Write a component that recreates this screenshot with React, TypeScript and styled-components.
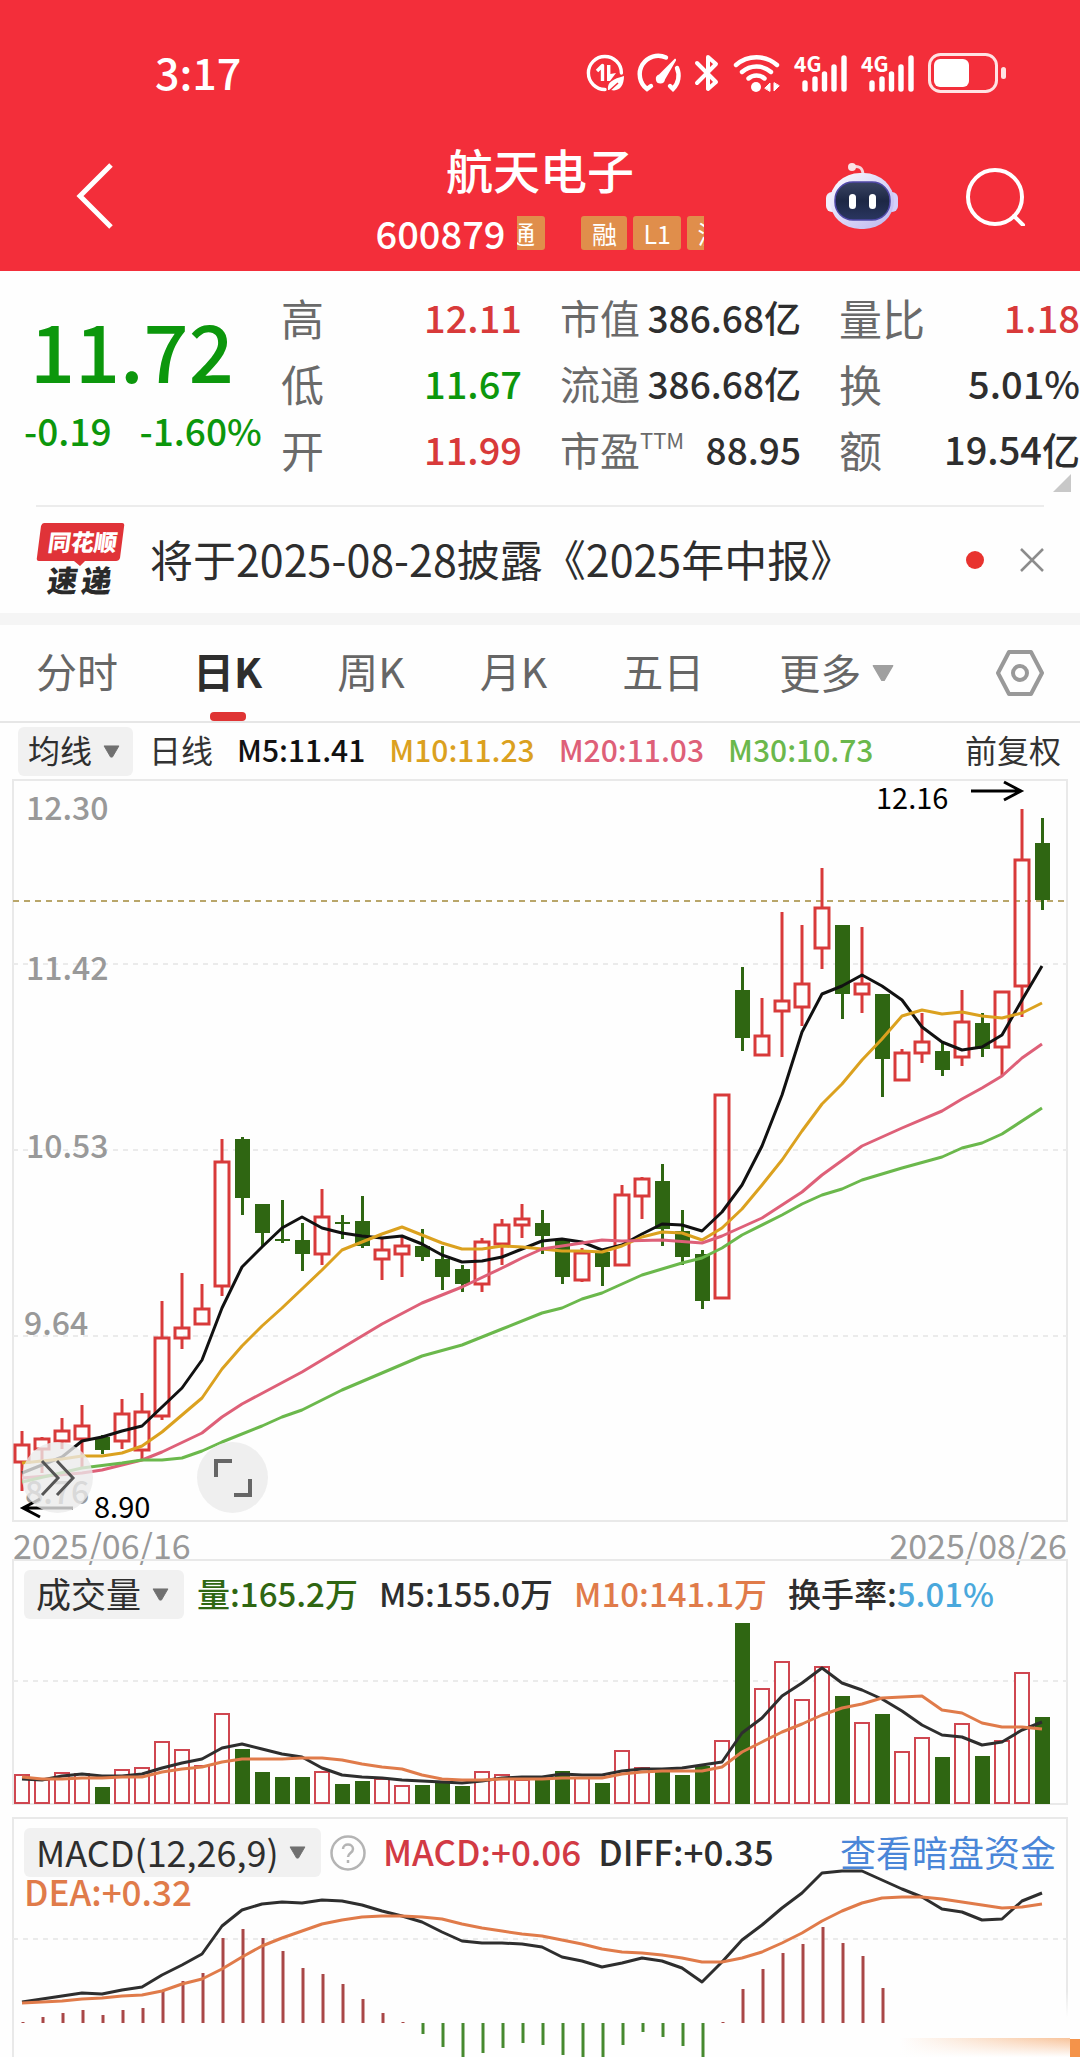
import React from 'react';
import styled, { createGlobalStyle } from 'styled-components';

const RED = '#d83a3a';
const GREEN = '#2f6612';
const ORANGE = '#e07b4a';
const INK = '#2e2e2e';
const FONT = '"Noto Sans CJK SC", "Noto Sans", sans-serif';

const GlobalStyle = createGlobalStyle`
  * { box-sizing: border-box; }
  body { margin: 0; background: #fefefe; font-family: ${FONT}; color: ${INK}; }
  button, select { font: inherit; color: inherit; background: none; border: 0; padding: 0; margin: 0; }
  dl, dt, dd, h1, p { margin: 0; font-weight: inherit; font-size: inherit; }
  svg { display: block; flex: none; }
`;

const Page = styled.main`
  position: relative;
  overflow: hidden;
`;

/* ---------- header ---------- */

const Header = styled.header`
  background: #f32e3a;
  color: #fff;
  padding-bottom: 21px;
`;

const StatusBar = styled.div`
  display: flex;
  align-items: center;
  justify-content: space-between;
  height: 141px;
  padding: 4px 74px 0 155px;
`;

const Clock = styled.time`
  padding-bottom: 4px;
  font-size: 43px;
  font-weight: 500;
  line-height: 48px;
`;

const StatusIcons = styled.div`
  display: flex;
  align-items: center;
  gap: 14px;
  svg { overflow: visible; }
`;

const NavBar = styled.nav`
  display: grid;
  grid-template-columns: 1fr auto 1fr;
  align-items: center;
  padding: 0 54px 0 76px;
`;

const IconButton = styled.button`
  display: flex;
  cursor: pointer;
`;

const NavActions = styled.div`
  display: flex;
  align-items: center;
  justify-content: flex-end;
  gap: 68px;
`;

const TitleBlock = styled.div`
  display: flex;
  flex-direction: column;
  align-items: center;
  gap: 19px;
  margin-right: 22px;
`;

const StockName = styled.h1`
  font-size: 47px;
  font-weight: 500;
  line-height: 56px;
`;

const CodeRow = styled.div`
  display: flex;
  align-items: center;
  gap: 12px;
  height: 34px;
  font-size: 38px;
  font-weight: 500;
  line-height: 34px;
`;

const TagTicker = styled.div`
  display: flex;
  width: 187px;
  overflow: hidden;
`;

const TagTrack = styled.div`
  display: flex;
  gap: 6px;
  margin-left: -18px;
`;

const Tag = styled.span<{ $last?: boolean }>`
  flex: none;
  min-width: 46px;
  padding: 0 10px;
  margin-right: ${(p) => (p.$last ? 30 : 0)}px;
  border-radius: 3px;
  background: #e08e4b;
  font-size: 25px;
  font-weight: 400;
  line-height: 34px;
  text-align: center;
`;

/* ---------- quote ---------- */

const Quote = styled.section`
  display: grid;
  grid-template-columns: 219px repeat(3, 1fr);
  column-gap: 38px;
  padding: 13px 0 23px 24px;
`;

const PriceBlock = styled.div`
  display: flex;
  flex-direction: column;
  gap: 8px;
  padding-top: 20px;
  color: #0c970c;
`;

const Price = styled.strong`
  padding-left: 6px;
  font-size: 79px;
  font-weight: 500;
  line-height: 90px;
`;

const Change = styled.div`
  display: flex;
  gap: 28px;
  font-size: 37px;
  font-weight: 500;
  line-height: 56px;
  white-space: nowrap;
`;

const StatList = styled.dl`
  display: flex;
  flex-direction: column;
`;

const Stat = styled.div`
  display: flex;
  align-items: center;
  justify-content: space-between;
  height: 66px;
  white-space: nowrap;
`;

const StatLabel = styled.dt<{ $wide?: boolean }>`
  display: flex;
  font-size: ${(p) => (p.$wide ? 43 : 40)}px;
  line-height: 60px;
  color: #6a6a6a;
`;

const Sup = styled.sup`
  font-size: 22px;
  line-height: 40px;
  vertical-align: baseline;
`;

const StatValue = styled.dd<{ $color?: string; $compact?: boolean }>`
  font-size: ${(p) => (p.$compact ? 37 : 38)}px;
  font-weight: 500;
  line-height: 60px;
  color: ${(p) => p.$color || INK};
`;

const Corner = styled.svg`
  position: absolute;
  right: 9px;
  top: 474px;
`;

/* ---------- notice ---------- */

const Notice = styled.section`
  display: flex;
  align-items: center;
  height: 108px;
  margin: 0 36px;
  border-top: 2px solid #ececec;
`;

const NoticeText = styled.a`
  flex: 1;
  margin-left: 25px;
  padding-bottom: 4px;
  font-size: 43px;
  line-height: 60px;
  color: ${INK};
  text-decoration: none;
  white-space: nowrap;
`;

const Dot = styled.i`
  width: 18px;
  height: 18px;
  margin-right: 36px;
  border-radius: 50%;
  background: #e8332f;
`;

/* ---------- period tabs ---------- */

const TabBar = styled.div`
  display: flex;
  align-items: center;
  gap: 75px;
  height: 110px;
  padding: 0 36px;
  border-top: 12px solid #f5f5f5;
  border-bottom: 2px solid #e6e6e6;
  & > :last-child { margin-left: auto; }
`;

const Tab = styled.button<{ $active?: boolean }>`
  display: flex;
  flex-direction: column;
  align-items: center;
  height: 96px;
  font-size: 41px;
  font-weight: ${(p) => (p.$active ? 700 : 400)};
  line-height: 91px;
  color: ${(p) => (p.$active ? INK : '#666')};
  white-space: nowrap;
  cursor: pointer;
  &::after {
    content: '';
    width: 36px;
    height: 9px;
    margin-top: -4px;
    border-radius: 4px;
    background: ${(p) => (p.$active ? '#df3434' : 'transparent')};
  }
`;

const Picker = styled.label<{ $chip?: boolean; $size: number }>`
  display: flex;
  flex: none;
  align-items: center;
  gap: ${(p) => (p.$chip ? 10 : 11)}px;
  height: 49px;
  margin-right: ${(p) => (p.$chip ? -8 : 0)}px;
  padding: ${(p) => (!p.$chip ? '0' : p.$size > 32 ? '0 15px 0 12px' : '0 13px 0 10px')};
  border-radius: 6px;
  background: ${(p) => (p.$chip ? '#f1f1f1' : 'transparent')};
  font-size: ${(p) => p.$size}px;
  color: ${(p) => (p.$chip ? INK : '#666')};
  select {
    appearance: none;
    outline: none;
    height: 48px;
    padding-bottom: 4px;
    line-height: 44px;
  }
`;

/* ---------- charts ---------- */

const Legend = styled.div`
  display: flex;
  align-items: center;
  gap: 24px;
  height: 56px;
  padding: 0 19px 0 18px;
  font-size: 30px;
  line-height: 44px;
  white-space: nowrap;
`;

const LegendName = styled.span<{ $end?: boolean }>`
  margin-left: ${(p) => (p.$end ? 'auto' : 0)};
  padding-bottom: 4px;
  font-size: 32px;
  color: #333;
`;

const Value = styled.span<{ $color: string }>`
  padding-bottom: 4px;
  color: ${(p) => p.$color};
  font-weight: 500;
`;

const Dates = styled.div`
  display: flex;
  justify-content: space-between;
  height: 37px;
  padding: 0 13px;
  font-size: 34px;
  line-height: 46px;
  color: #999;
`;

const Panel = styled.section`
  display: grid;
  & > * { grid-area: 1 / 1; }
`;

const PanelHead = styled.div<{ $gap: number; $size: number }>`
  display: flex;
  flex-wrap: wrap;
  align-items: center;
  align-content: flex-start;
  column-gap: ${(p) => p.$gap}px;
  padding: 11px 24px 0;
  z-index: 1;
  font-size: ${(p) => p.$size}px;
  line-height: 44px;
  white-space: nowrap;
`;

const SecondLine = styled.div`
  flex-basis: 100%;
  line-height: 28px;
`;

const DarkPoolLink = styled.a`
  margin-left: auto;
  padding-bottom: 4px;
  font-size: 36px;
  color: #4a86d8;
  text-decoration: none;
`;

const Plot = styled.svg`
  width: 100%;
  height: auto;
`;

const ChartTools = styled.div`
  display: flex;
  align-items: flex-end;
  align-self: end;
  gap: 104px;
  padding: 0 0 9px 22px;
`;

const RoundButton = styled.button`
  display: flex;
  align-items: center;
  justify-content: center;
  width: 71px;
  height: 71px;
  border-radius: 50%;
  background: rgba(234, 234, 234, 0.78);
  cursor: pointer;
`;

const Glow = styled.div`
  position: absolute;
  right: 0;
  bottom: 0;
  width: 180px;
  height: 66px;
  background:
    linear-gradient(#f4934a, #f4934a) 100% 100% / 10px 18px no-repeat,
    linear-gradient(180deg, #fefefe00, #fefefe) 0 100% / 170px 19px no-repeat,
    linear-gradient(90deg, #fff0, #f8c39a) 0 100% / 170px 19px no-repeat,
    linear-gradient(180deg, #fefefe00, #fefefe 40%);
`;

/* ---------- data ---------- */

// [rising, high, body top, body bottom, low] in chart units
type Candle = [number, number, number, number, number];
const candles: Candle[] = [
  [1, 1431, 1444, 1463, 1491], [1, 1437, 1438, 1450, 1473], [1, 1418, 1430, 1442, 1449], [1, 1405, 1425, 1440, 1467],
  [0, 1435, 1437, 1450, 1454], [1, 1399, 1413, 1442, 1449], [1, 1393, 1411, 1451, 1460], [1, 1301, 1337, 1417, 1420],
  [1, 1273, 1327, 1339, 1349], [1, 1284, 1308, 1325, 1325], [1, 1139, 1161, 1287, 1296], [0, 1137, 1139, 1198, 1215],
  [0, 1204, 1204, 1233, 1247], [0, 1200, 1239, 1241, 1243], [0, 1223, 1240, 1254, 1271], [1, 1189, 1216, 1255, 1265],
  [0, 1215, 1222, 1224, 1239], [0, 1196, 1221, 1246, 1248], [1, 1239, 1249, 1260, 1280], [1, 1237, 1245, 1255, 1277],
  [0, 1229, 1246, 1257, 1261], [0, 1246, 1259, 1277, 1290], [0, 1265, 1269, 1284, 1292], [1, 1238, 1241, 1285, 1292],
  [1, 1219, 1224, 1245, 1265], [1, 1204, 1218, 1226, 1238], [0, 1210, 1223, 1236, 1254], [0, 1239, 1239, 1277, 1284],
  [1, 1248, 1252, 1281, 1282], [0, 1252, 1252, 1267, 1286], [1, 1185, 1194, 1266, 1266], [1, 1177, 1178, 1197, 1219],
  [0, 1164, 1181, 1229, 1246], [0, 1210, 1231, 1257, 1265], [0, 1250, 1254, 1301, 1309], [1, 1094, 1094, 1299, 1299],
  [0, 967, 990, 1038, 1051], [1, 998, 1035, 1056, 1056], [1, 912, 1000, 1012, 1057], [1, 925, 983, 1008, 1026],
  [1, 868, 907, 949, 969], [0, 925, 925, 994, 1019], [1, 927, 983, 995, 1013], [0, 994, 994, 1059, 1097],
  [1, 1049, 1052, 1081, 1081], [1, 1013, 1041, 1054, 1063], [0, 1043, 1051, 1070, 1076], [1, 990, 1021, 1058, 1066],
  [0, 1013, 1023, 1049, 1057], [1, 991, 991, 1048, 1075], [1, 809, 859, 987, 1017], [0, 818, 843, 900, 910],
];

type Point = [number, number];
const series = (ys: number[]): Point[] => ys.map((y, i) => [i, y]);

const ma5 = series([
  1473, 1465, 1457, 1441, 1437, 1431, 1426, 1407, 1388, 1360, 1308, 1267, 1247, 1228, 1217, 1228, 1233, 1236, 1238, 1236,
  1244, 1255, 1262, 1261, 1257, 1249, 1241, 1239, 1242, 1250, 1245, 1234, 1224, 1225, 1231, 1212, 1185, 1146, 1095, 1032,
  994, 986, 975, 986, 1000, 1027, 1042, 1050, 1047, 1035, 1000, 966,
]);
const ma10 = series([
  1463, 1461, 1459, 1456, 1456, 1453, 1446, 1432, 1415, 1398, 1369, 1346, 1326, 1308, 1289, 1270, 1250, 1242, 1234, 1227,
  1235, 1243, 1249, 1249, 1246, 1247, 1249, 1251, 1251, 1252, 1246, 1237, 1232, 1233, 1240, 1228, 1209, 1185, 1160, 1131,
  1104, 1084, 1060, 1039, 1016, 1010, 1014, 1012, 1016, 1018, 1013, 1003,
]);
const ma20: Point[] = [
  [0, 1478], [3, 1473], [4, 1470], [6, 1460], [7, 1452], [9, 1433], [10, 1417], [11, 1404], [14, 1372], [18, 1324],
  [20, 1303], [22, 1287], [24, 1268], [25, 1258], [26, 1249], [28, 1243], [29, 1240], [30, 1241], [32, 1240], [34, 1243],
  [35, 1236], [37, 1218], [39, 1192], [40, 1175], [42, 1146], [44, 1128], [46, 1111], [47, 1099], [48, 1088], [49, 1076],
  [50, 1058], [51, 1044],
];
const ma30: Point[] = [
  [0, 1482], [3, 1468], [5, 1463], [6, 1460], [7, 1460], [8, 1458], [9, 1451], [10, 1442], [12, 1426], [13, 1417],
  [14, 1410], [16, 1390], [18, 1373], [20, 1356], [22, 1345], [24, 1329], [26, 1313], [27, 1308], [28, 1299], [29, 1293],
  [30, 1284], [31, 1275], [32, 1269], [33, 1263], [34, 1258], [35, 1248], [36, 1235], [38, 1215], [39, 1204], [40, 1195],
  [41, 1189], [42, 1180], [44, 1168], [46, 1157], [47, 1148], [48, 1143], [49, 1134], [51, 1108],
];

const volumeTops = [
  1774, 1779, 1772, 1773, 1787, 1769, 1767, 1741, 1749, 1765, 1713, 1749, 1772, 1777, 1777, 1771, 1784, 1781, 1778, 1785,
  1785, 1782, 1786, 1771, 1774, 1779, 1780, 1771, 1777, 1783, 1750, 1767, 1770, 1775, 1766, 1740, 1623, 1688, 1661, 1699,
  1666, 1696, 1722, 1714, 1751, 1737, 1757, 1723, 1756, 1740, 1672, 1717,
];
const volume5 = series([
  1779, 1780, 1776, 1774, 1776, 1776, 1774, 1768, 1763, 1759, 1748, 1744, 1749, 1754, 1757, 1768, 1775, 1777, 1778, 1780,
  1781, 1782, 1783, 1781, 1778, 1777, 1777, 1774, 1775, 1775, 1771, 1769, 1769, 1768, 1765, 1762, 1733, 1718, 1696, 1683,
  1668, 1683, 1690, 1699, 1711, 1725, 1735, 1737, 1745, 1742, 1730, 1722,
]);
const volume10 = series([
  1777, 1779, 1779, 1778, 1778, 1777, 1777, 1772, 1769, 1767, 1762, 1759, 1759, 1759, 1758, 1758, 1760, 1764, 1767, 1769,
  1775, 1779, 1780, 1780, 1779, 1779, 1779, 1778, 1778, 1778, 1774, 1772, 1771, 1771, 1771, 1767, 1752, 1742, 1732, 1724,
  1715, 1708, 1704, 1698, 1697, 1696, 1710, 1713, 1723, 1727, 1727, 1729,
]);

const ZERO = 2023;
const histogram = [
  2023, 2017, 2013, 2010, 2015, 2010, 2008, 1991, 1981, 1973, 1938, 1929, 1938, 1951, 1968, 1974, 1984, 1999, 2013, 2023,
  2034, 2047, 2058, 2053, 2048, 2043, 2045, 2055, 2058, 2060, 2045, 2032, 2037, 2046, 2060, 2023, 1989, 1969, 1953, 1944,
  1927, 1943, 1956, 1988,
];
const diff = series([
  2002, 1999, 1996, 1993, 1994, 1990, 1987, 1975, 1965, 1954, 1926, 1910, 1904, 1902, 1903, 1900, 1901, 1905, 1911, 1916,
  1922, 1932, 1941, 1943, 1943, 1944, 1947, 1957, 1961, 1967, 1963, 1958, 1961, 1968, 1982, 1962, 1940, 1925, 1908, 1893,
  1873, 1871, 1871, 1880, 1889, 1897, 1909, 1912, 1920, 1919, 1901, 1893,
]);
const dea = series([
  2003, 2002, 2001, 1999, 1998, 1996, 1995, 1991, 1984, 1979, 1969, 1957, 1946, 1938, 1931, 1924, 1920, 1917, 1916, 1916,
  1917, 1919, 1924, 1928, 1931, 1934, 1936, 1940, 1944, 1949, 1952, 1953, 1955, 1958, 1962, 1962, 1958, 1952, 1943, 1933,
  1921, 1911, 1903, 1898, 1897, 1897, 1899, 1902, 1905, 1908, 1907, 1904,
]);

const xOf = (i: number) => 22 + i * 20;

/* ---------- chart pieces ---------- */

const Line = ({ points, color }: { points: Point[]; color: string }) => (
  <polyline
    points={points.map(([i, y]) => `${xOf(i)},${y}`).join(' ')}
    fill="none" stroke={color} strokeWidth="3" strokeLinejoin="round"
  />
);

const GridLine = ({ y, color = '#ebebeb', dash = '5 5' }: { y: number; color?: string; dash?: string }) => (
  <line x1="13" x2="1067" y1={y} y2={y} stroke={color} strokeWidth="2" strokeDasharray={dash} />
);

const Frame = ({ y, height }: { y: number; height: number }) => (
  <rect x="13" y={y} width="1054" height={height} fill="none" stroke="#e9e9e9" strokeWidth="2" />
);

const CandleMark = ({ candle: [up, high, top, bottom, low], index }: { candle: Candle; index: number }) => {
  const x = xOf(index);
  if (!up) {
    return (
      <g fill={GREEN}>
        <rect x={x - 1} y={high} width="3" height={low - high} />
        <rect x={x - 7} y={top} width="15" height={bottom - top} />
      </g>
    );
  }
  return (
    <g stroke={RED} strokeWidth="3" fill="none">
      <path d={`M${x} ${high}V${top}M${x} ${bottom}V${low}`} />
      <rect x={x - 7} y={top + 1} width="14" height={bottom - top - 2} />
    </g>
  );
};

const PriceChart = () => (
  <Plot viewBox="0 779 1080 743" role="img" aria-label="日K线图">
    <Frame y={780} height={741} />
    {[964, 1150, 1336].map((y) => <GridLine key={y} y={y} />)}
    <GridLine y={901} color="#b9a66a" dash="6 5" />
    <g fill="#999" fontSize="32" fontFamily={FONT} fontWeight="500">
      <text x="26" y="820">12.30</text>
      <text x="26" y="980">11.42</text>
      <text x="26" y="1158">10.53</text>
      <text x="24" y="1335">9.64</text>
      <text x="25" y="1504">8.76</text>
    </g>
    {candles.map((c, i) => <CandleMark key={i} candle={c} index={i} />)}
    <Line points={ma5} color="#111" />
    <Line points={ma10} color="#dba11f" />
    <Line points={ma20} color="#de6078" />
    <Line points={ma30} color="#6bb84c" />
    <g fill="#000" fontSize="29" fontFamily={FONT}>
      <text x="876" y="809">12.16</text>
      <text x="94" y="1518">8.90</text>
    </g>
    <g fill="none" stroke="#000" strokeWidth="3">
      <path d="M971 791H1021M1004 782L1021 791L1004 800" />
      <path d="M73 1508H23M40 1499L23 1508L40 1517" />
    </g>
  </Plot>
);

const VolumeChart = () => (
  <Plot viewBox="0 1559 1080 258" role="img" aria-label="成交量">
    <Frame y={1560} height={244} />
    <GridLine y={1681} />
    {volumeTops.map((y, i) => candles[i][0] ? (
      <rect key={i} x={xOf(i) - 7} y={y + 1} width="14" height={1803 - y - 1} fill="#fefefe" stroke="#cf4650" strokeWidth="2" />
    ) : (
      <rect key={i} x={xOf(i) - 7} y={y} width="15" height={1804 - y} fill={GREEN} />
    ))}
    <Line points={volume5} color={INK} />
    <Line points={volume10} color={ORANGE} />
  </Plot>
);

const MacdChart = () => (
  <Plot viewBox="0 1817 1080 240" role="img" aria-label="MACD">
    <Frame y={1818} height={260} />
    <GridLine y={1939} />
    {histogram.map((y, i) => (
      <path key={i} d={`M${xOf(i) + 1} ${ZERO}V${y === ZERO ? ZERO - 1 : y}`} stroke={y > ZERO ? '#46892f' : '#a94747'} strokeWidth="3" />
    ))}
    <Line points={diff} color={INK} />
    <Line points={dea} color={ORANGE} />
  </Plot>
);

/* ---------- icons ---------- */

const EcoIcon = () => (
  <svg width="38" height="38" viewBox="0 0 38 38" fill="none" stroke="#fff" strokeWidth="3.4">
    <path d="M18 35.5A16.5 16.5 0 1 1 34.4 19" strokeLinecap="round" />
    <path d="M10 17L15.500 11.500V27" strokeWidth="3.400" strokeLinejoin="round" />
    <path d="M20 11H23.400V20L29 19L23 27H20Z" fill="#fff" stroke="none" />
    <path d="M21 36C20 28 26 25 37 22C37 32 32 38 24 36Z" fill="#fff" stroke="none" />
    <path d="M21 38L31 29" stroke="#f32e3a" strokeWidth="1.6" />
  </svg>
);

const GaugeIcon = () => (
  <svg width="42" height="38" viewBox="0 0 42 38" fill="none" stroke="#fff" strokeWidth="4.400" strokeLinecap="round">
    <path d="M12 32L8 35A18.500 18.500 0 0 1 27 3.500M38 14A19 19 0 0 1 34 35L31 32" />
    <path d="M36 4.500Q37.500 5 37 6.500L26 25.500A4.600 4.600 0 1 1 20 20.500Z" fill="#fff" stroke="none" />
  </svg>
);

const BluetoothIcon = () => (
  <svg width="24" height="38" viewBox="0 0 24 38" fill="none" stroke="#fff" strokeWidth="4" strokeLinejoin="round" strokeLinecap="round">
    <path d="M2 9L21 28L13 35V3L21 10L2 29" />
  </svg>
);

const WifiIcon = () => (
  <svg width="47" height="38" viewBox="0 0 47 38" fill="none" stroke="#fff" strokeWidth="4.400" strokeLinecap="round">
    <path d="M3 11A31 31 0 0 1 44 11M9 18A22 22 0 0 1 38 18M15.500 24.500A12 12 0 0 1 31.500 24.500" />
    <circle cx="23" cy="33" r="5" fill="#fff" stroke="none" />
    <path d="M32 34L37 29V37ZM46 32L41 37V29Z" fill="#fff" strokeWidth="1" />
  </svg>
);

const SignalIcon = () => (
  <svg width="53" height="38" viewBox="0 0 53 38">
    <text x="0" y="18" fill="#fff" fontSize="21" fontWeight="700" fontFamily={FONT}>4G</text>
    <g stroke="#fff" strokeWidth="5.400" strokeLinecap="round">
      <path d="M11 35V29M21 35V25M30.500 35V20M40 35V13M50 35V4" />
    </g>
  </svg>
);

const BatteryIcon = () => (
  <svg width="78" height="40" viewBox="0 0 78 40" fill="none">
    <rect x="1.500" y="1.500" width="67" height="37" rx="11" stroke="#ffe3e3" strokeWidth="3" />
    <rect x="6" y="6" width="35" height="28" rx="6" fill="#fff" />
    <rect x="73" y="14" width="5" height="12" rx="2.500" fill="#ffe3e3" />
  </svg>
);

const RobotIcon = () => (
  <svg width="72" height="68" viewBox="0 0 72 68">
    <defs>
      <linearGradient id="shell" x1="0" y1="0" x2="1" y2="1">
        <stop offset="0" stopColor="#fff" /><stop offset="0.5" stopColor="#dcd8f8" /><stop offset="1" stopColor="#b9b4ee" />
      </linearGradient>
      <linearGradient id="visor" x1="0" y1="0" x2="0" y2="1">
        <stop offset="0" stopColor="#3a4462" /><stop offset="0.5" stopColor="#1d2745" /><stop offset="1" stopColor="#2a3660" />
      </linearGradient>
    </defs>
    <path d="M26 5C33 3 37 6 37 13" fill="none" stroke="#f6d5dc" strokeWidth="3" />
    <circle cx="26" cy="5" r="4" fill="#fbe3e6" />
    <rect x="0" y="30" width="12" height="20" rx="6" fill="#f1effc" />
    <rect x="60" y="30" width="12" height="20" rx="6" fill="#d4d0fa" />
    <rect x="4" y="11" width="64" height="56" rx="30" fill="url(#shell)" />
    <rect x="9" y="20" width="55" height="38" rx="18" fill="url(#visor)" stroke="#5048a8" strokeWidth="1.500" />
    <rect x="23" y="32" width="7" height="15" rx="3.500" fill="#fff" />
    <rect x="43" y="32" width="7" height="15" rx="3.500" fill="#fff" />
  </svg>
);

const ExpressLogo = () => (
  <svg width="89" height="76" viewBox="0 0 89 76" fontFamily={FONT} fontWeight="900" role="img" aria-label="同花顺速递">
    <path d="M8 1H86Q89 1 88 5L84 36Q83 39 80 39H49L44 44L38 39H3Q0 39 1 35L5 4Q6 1 8 1Z" fill="#e03338" />
    <g transform="skewX(-8)">
      <text x="15" y="29" fontSize="23" fill="#fff">同花顺</text>
      <text x="20" y="70" fontSize="30" fill="#2a2a2a">速</text>
      <text x="54" y="70" fontSize="30" fill="#2a2a2a">递</text>
    </g>
  </svg>
);

const Caret = ({ size = 18, color = '#707070' }: { size?: number; color?: string }) => (
  <svg width={size} height={size - 4} viewBox="0 0 18 14">
    <path d="M1 1H17L10 13H8Z" fill={color} stroke={color} strokeLinejoin="round" />
  </svg>
);

const Dropdown = ({ label, value, size, chip }: { label: string; value: string; size: number; chip?: boolean }) => (
  <Picker $chip={chip} $size={size}>
    <select aria-label={label}><option>{value}</option></select>
    <Caret size={chip ? 17 : 22} color={chip ? '#707070' : '#a0a0a0'} />
  </Picker>
);

/* ---------- page ---------- */

const VALUE_RED = '#d83a3a';
const VALUE_GREEN = '#0c970c';

export default function App() {
  return (
    <Page>
      <GlobalStyle />
      <Header>
        <StatusBar>
          <Clock>3:17</Clock>
          <StatusIcons>
            <EcoIcon /><GaugeIcon /><BluetoothIcon /><WifiIcon /><SignalIcon /><SignalIcon /><BatteryIcon />
          </StatusIcons>
        </StatusBar>
        <NavBar>
          <IconButton aria-label="返回">
            <svg width="38" height="66" viewBox="0 0 38 66" fill="none" stroke="#fff" strokeWidth="5">
              <path d="M35 2L4 33L35 64" />
            </svg>
          </IconButton>
          <TitleBlock>
            <StockName>航天电子</StockName>
            <CodeRow>
              600879
              <TagTicker>
                <TagTrack>
                  <Tag $last>通</Tag><Tag>融</Tag><Tag>L1</Tag><Tag>沪</Tag>
                </TagTrack>
              </TagTicker>
            </CodeRow>
          </TitleBlock>
          <NavActions>
            <IconButton aria-label="智能助手"><RobotIcon /></IconButton>
            <IconButton aria-label="搜索">
              <svg width="60" height="60" viewBox="0 0 60 60" fill="none" stroke="#fff" strokeWidth="4" strokeLinecap="round">
                <circle cx="29" cy="31" r="27" /><path d="M48 50L57 59" />
              </svg>
            </IconButton>
          </NavActions>
        </NavBar>
      </Header>

      <Quote>
        <PriceBlock>
          <Price>11.72</Price>
          <Change><span>-0.19</span><span>-1.60%</span></Change>
        </PriceBlock>
        <StatList>
          <Stat><StatLabel $wide>高</StatLabel><StatValue $color={VALUE_RED}>12.11</StatValue></Stat>
          <Stat><StatLabel $wide>低</StatLabel><StatValue $color={VALUE_GREEN}>11.67</StatValue></Stat>
          <Stat><StatLabel $wide>开</StatLabel><StatValue $color={VALUE_RED}>11.99</StatValue></Stat>
        </StatList>
        <StatList>
          <Stat><StatLabel>市值</StatLabel><StatValue $compact>386.68亿</StatValue></Stat>
          <Stat><StatLabel>流通</StatLabel><StatValue $compact>386.68亿</StatValue></Stat>
          <Stat><StatLabel>市盈<Sup>TTM</Sup></StatLabel><StatValue $compact>88.95</StatValue></Stat>
        </StatList>
        <StatList>
          <Stat><StatLabel $wide>量比</StatLabel><StatValue $color={VALUE_RED}>1.18</StatValue></Stat>
          <Stat><StatLabel $wide>换</StatLabel><StatValue>5.01%</StatValue></Stat>
          <Stat><StatLabel $wide>额</StatLabel><StatValue>19.54亿</StatValue></Stat>
        </StatList>
      </Quote>
      <Corner width="18" height="18" viewBox="0 0 18 18"><path d="M18 0V18H0Z" fill="#c8c8c8" /></Corner>

      <Notice>
        <ExpressLogo />
        <NoticeText href="#notice">将于2025-08-28披露《2025年中报》</NoticeText>
        <Dot />
        <IconButton aria-label="关闭">
          <svg width="24" height="24" viewBox="0 0 24 24" stroke="#8c8c8c" strokeWidth="2.500"><path d="M1 1L23 23M23 1L1 23" /></svg>
        </IconButton>
      </Notice>

      <TabBar>
        <Tab>分时</Tab>
        <Tab $active>日K</Tab>
        <Tab>周K</Tab>
        <Tab>月K</Tab>
        <Tab>五日</Tab>
        <Dropdown label="更多周期" value="更多" size={41} />
        <IconButton aria-label="图表设置">
          <svg width="48" height="46" viewBox="0 0 48 46" fill="none" stroke="#999" strokeWidth="4" strokeLinejoin="round">
            <path d="M13 2H35L46 23L35 44H13L2 23Z" /><circle cx="24" cy="23" r="7" />
          </svg>
        </IconButton>
      </TabBar>

      <Legend>
        <Dropdown label="主图指标" value="均线" size={32} chip />
        <LegendName>日线</LegendName>
        <Value $color="#111">M5:11.41</Value>
        <Value $color="#dba11f">M10:11.23</Value>
        <Value $color="#de6078">M20:11.03</Value>
        <Value $color="#6bb84c">M30:10.73</Value>
        <LegendName $end>前复权</LegendName>
      </Legend>

      <Panel>
        <PriceChart />
        <ChartTools>
          <RoundButton aria-label="展开">
            <svg width="36" height="38" viewBox="0 0 36 38" fill="none" stroke="#555" strokeWidth="3"><path d="M2 2L18 19L2 36M17 2L33 19L17 36" /></svg>
          </RoundButton>
          <RoundButton aria-label="全屏">
            <svg width="38" height="38" viewBox="0 0 38 38" fill="none" stroke="#666" strokeWidth="4"><path d="M2 18V2H18M36 20V36H20" /></svg>
          </RoundButton>
        </ChartTools>
      </Panel>
      <Dates><time>2025/06/16</time><time>2025/08/26</time></Dates>

      <Panel>
        <VolumeChart />
        <PanelHead $gap={21} $size={33}>
          <Dropdown label="副图指标一" value="成交量" size={35} chip />
          <Value $color={GREEN}>量:165.2万</Value>
          <Value $color={INK}>M5:155.0万</Value>
          <Value $color={ORANGE}>M10:141.1万</Value>
          <Value $color={INK}>换手率:<Value $color="#4aa8dc">5.01%</Value></Value>
        </PanelHead>
      </Panel>

      <Panel>
        <MacdChart />
        <PanelHead $gap={17} $size={35}>
          <Dropdown label="副图指标二" value="MACD(12,26,9)" size={36} chip />
          <IconButton aria-label="指标说明">
            <svg width="36" height="36" viewBox="0 0 36 36" fill="none" stroke="#b4b4b4" strokeWidth="2.500">
              <circle cx="18" cy="18" r="16.500" />
              <path d="M13 14C13 8 23 8 23 14C23 18 18 18 18 22M18 25V28" />
            </svg>
          </IconButton>
          <Value $color="#d23a44">MACD:+0.06</Value>
          <Value $color={INK}>DIFF:+0.35</Value>
          <DarkPoolLink href="#dark-pool">查看暗盘资金</DarkPoolLink>
          <SecondLine><Value $color={ORANGE}>DEA:+0.32</Value></SecondLine>
        </PanelHead>
      </Panel>
      <Glow />
    </Page>
  );
}
